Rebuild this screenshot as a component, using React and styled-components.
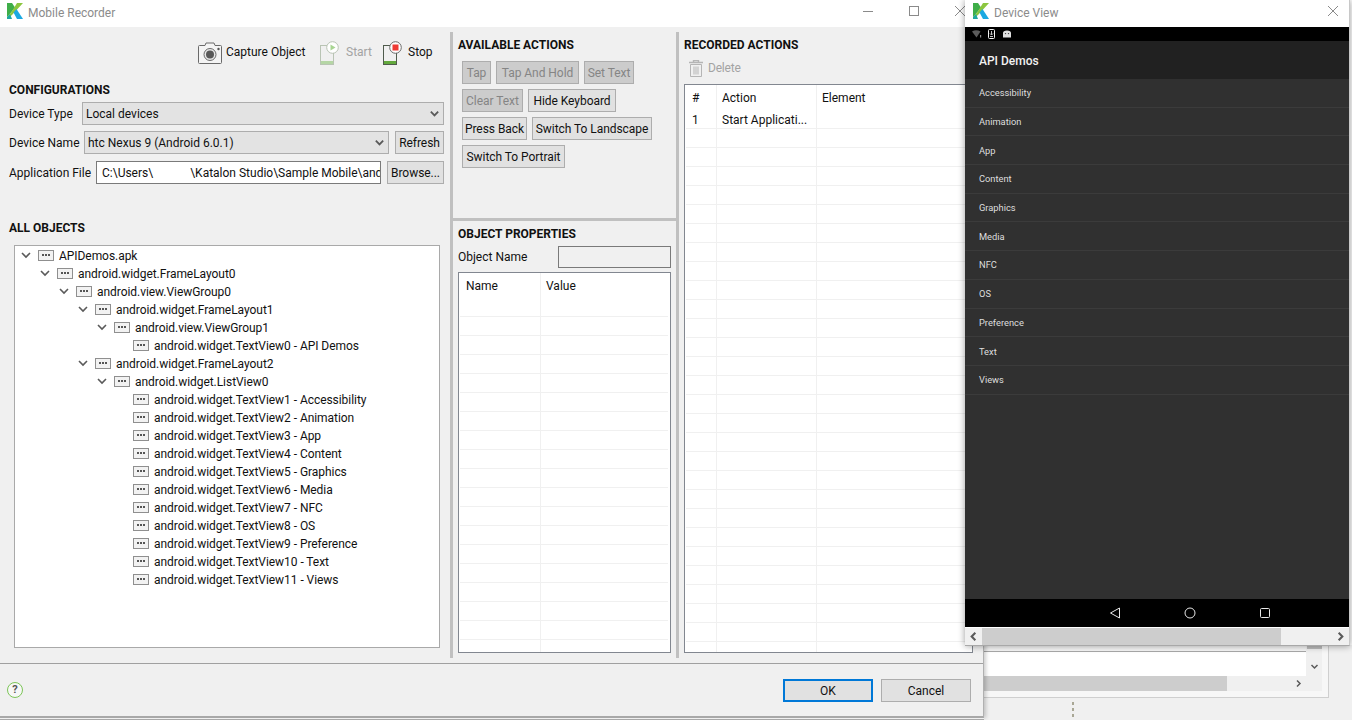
import React from 'react';
import styled, { createGlobalStyle } from 'styled-components';

const treeItems = [
  { level: 0, label: 'APIDemos.apk', open: true },
  { level: 1, label: 'android.widget.FrameLayout0', open: true },
  { level: 2, label: 'android.view.ViewGroup0', open: true },
  { level: 3, label: 'android.widget.FrameLayout1', open: true },
  { level: 4, label: 'android.view.ViewGroup1', open: true },
  { level: 5, label: 'android.widget.TextView0 - API Demos' },
  { level: 3, label: 'android.widget.FrameLayout2', open: true },
  { level: 4, label: 'android.widget.ListView0', open: true },
  { level: 5, label: 'android.widget.TextView1 - Accessibility' },
  { level: 5, label: 'android.widget.TextView2 - Animation' },
  { level: 5, label: 'android.widget.TextView3 - App' },
  { level: 5, label: 'android.widget.TextView4 - Content' },
  { level: 5, label: 'android.widget.TextView5 - Graphics' },
  { level: 5, label: 'android.widget.TextView6 - Media' },
  { level: 5, label: 'android.widget.TextView7 - NFC' },
  { level: 5, label: 'android.widget.TextView8 - OS' },
  { level: 5, label: 'android.widget.TextView9 - Preference' },
  { level: 5, label: 'android.widget.TextView10 - Text' },
  { level: 5, label: 'android.widget.TextView11 - Views' },
];

const actionRows = [
  [
    { label: 'Tap', w: 29, off: true },
    { label: 'Tap And Hold', w: 83, off: true },
    { label: 'Set Text', w: 50, off: true },
  ],
  [
    { label: 'Clear Text', w: 61, off: true },
    { label: 'Hide Keyboard', w: 88 },
  ],
  [
    { label: 'Press Back', w: 65 },
    { label: 'Switch To Landscape', w: 120 },
  ],
  [{ label: 'Switch To Portrait', w: 103 }],
];

const demoItems = ['Accessibility', 'Animation', 'App', 'Content', 'Graphics', 'Media', 'NFC', 'OS', 'Preference', 'Text', 'Views'];

const Logo = () => (
  <LogoSvg viewBox="0 0 16 16">
    <polygon points="0,0 5,0 8,4.5 4.5,9 0,14" fill="#3fae49" />
    <polygon points="10,0 16,0 5,12 0,16 0,14 4.5,9" fill="#8cc63f" />
    <polygon points="6.5,9.5 9.5,6 16,16 10,16" fill="#1ba9e1" />
    <polygon points="0,14 3,11 5,16 0,16" fill="#1fa8a0" />
  </LogoSvg>
);

const Chevron = ({ dir = 'down', size = 9, color = '#5a5a5a', width = 1.5 }) => {
  const points = {
    down: '1.5,3 4.5,6 7.5,3',
    left: '6,1.5 3,4.5 6,7.5',
    right: '3,1.5 6,4.5 3,7.5',
  };
  return (
    <svg width={size} height={size} viewBox="0 0 9 9">
      <polyline points={points[dir]} fill="none" stroke={color} strokeWidth={width} />
    </svg>
  );
};

const CloseIcon = () => (
  <svg width="10" height="10" viewBox="0 0 10 10">
    <path d="M0 0L10 10M10 0L0 10" stroke="#8a8a8a" strokeWidth="1" />
  </svg>
);

const CameraIcon = () => (
  <svg width="24" height="22" viewBox="0 0 24 22">
    <path d="M7 3.5L8 1H16L17 3.5H22.5Q23.5 3.5 23.5 4.5V20.5Q23.5 21.5 22.5 21.5H1.5Q.5 21.5 .5 20.5V4.5Q.5 3.5 1.5 3.5Z" fill="#f4f4f4" stroke="#6a6a6a" />
    <circle cx="12" cy="12.5" r="6" fill="#e8e8e8" stroke="#6a6a6a" />
    <circle cx="12" cy="12.5" r="4" fill="#585858" />
    <circle cx="20.5" cy="7" r="1.2" fill="#555" />
  </svg>
);

const PhoneIcon = ({ stroke, bar, badge, children }) => (
  <svg width="19" height="24" viewBox="0 0 19 24">
    <rect x="0.5" y="4.5" width="13" height="19" fill="none" stroke={stroke} />
    <rect x="1" y="20" width="12" height="3" fill={bar} />
    <circle cx="12.5" cy="6.5" r="5.8" fill="#fff" stroke={badge} />
    {children}
  </svg>
);

const TrashIcon = () => (
  <svg width="14" height="17" viewBox="0 0 14 17">
    <path d="M0 2.5H14M4.5 2.5V.5H9.5V2.5" stroke="#b5b5b5" strokeWidth="1.4" fill="none" />
    <path d="M1.5 4.5H12.5V16.5H1.5ZM5 6.5V14.5M7 6.5V14.5M9 6.5V14.5" stroke="#b5b5b5" fill="none" />
  </svg>
);

const NodeIcon = () => (
  <NodeBox>
    <span />
    <span />
    <span />
  </NodeBox>
);

const TableGrid = ({ cols, heads, rows, count }) => (
  <GridTable>
    <GridHead $cols={cols}>
      {heads.map((h) => (
        <HeadCell key={h}>{h}</HeadCell>
      ))}
    </GridHead>
    {Array.from({ length: count }).map((_, i) => (
      <GridRow key={i} $cols={cols}>
        {heads.map((h, j) => (
          <BodyCell key={h}>{rows[i] ? rows[i][j] : ''}</BodyCell>
        ))}
      </GridRow>
    ))}
  </GridTable>
);

const App = () => {
  return (
    <Desktop>
      <GlobalStyle />

      <BackTop />
      <BackWindow>
        <BackContent>
          <BackWhite />
          <BackVBar>
            <BackThumbTop />
            <Chevron dir="down" />
          </BackVBar>
        </BackContent>
        <BackHBar>
          <BackHThumb />
          <Chevron dir="right" />
        </BackHBar>
      </BackWindow>
      <GripDots>
        <i />
        <i />
        <i />
      </GripDots>

      <MainWindow>
        <TitleBar>
          <Logo />
          <TitleText>Mobile Recorder</TitleText>
          <WinControls>
            <WinButton>
              <svg width="10" height="10" viewBox="0 0 10 10">
                <path d="M0 5.5H10" stroke="#8a8a8a" />
              </svg>
            </WinButton>
            <WinButton>
              <svg width="10" height="10" viewBox="0 0 10 10">
                <rect x=".5" y=".5" width="9" height="9" fill="none" stroke="#8a8a8a" />
              </svg>
            </WinButton>
            <WinButton>
              <CloseIcon />
            </WinButton>
          </WinControls>
        </TitleBar>

        <Body>
          <LeftPane>
            <Toolbar>
              <ToolItem $gap={4}>
                <CameraIcon />
                <ToolLabel $w={80}>Capture Object</ToolLabel>
              </ToolItem>
              <ToolItem $gap={7} $off>
                <PhoneIcon stroke="#b9c4b4" bar="#b5d6a5" badge="#b9c4b4">
                  <polygon points="10.5,3.5 15.5,6.5 10.5,9.5" fill="#a8d592" />
                </PhoneIcon>
                <ToolLabel $w={23}>Start</ToolLabel>
              </ToolItem>
              <ToolItem $gap={6}>
                <PhoneIcon stroke="#4f5b4c" bar="#62a83c" badge="#6b6b6b">
                  <rect x="9.5" y="3.5" width="6" height="6" fill="#ee3a34" />
                </PhoneIcon>
                <ToolLabel $w={24}>Stop</ToolLabel>
              </ToolItem>
            </Toolbar>

            <SectionTitle $top={17}>CONFIGURATIONS</SectionTitle>
            <FormRow $top={4}>
              <FieldLabel $width={73}>Device Type</FieldLabel>
              <SelectBox>
                <span>Local devices</span>
                <Chevron dir="down" size={11} />
              </SelectBox>
            </FormRow>
            <FormRow $top={6}>
              <FieldLabel $width={75}>Device Name</FieldLabel>
              <SelectBox>
                <span>htc Nexus 9 (Android 6.0.1)</span>
                <Chevron dir="down" size={11} />
              </SelectBox>
              <FlatButton $w={49}>Refresh</FlatButton>
            </FormRow>
            <FormRow $top={7}>
              <FieldLabel $width={87}>Application File</FieldLabel>
              <PathInput>
                C:\Users\<Redacted />\Katalon Studio\Sample Mobile\andr
              </PathInput>
              <FlatButton $w={57}>Browse...</FlatButton>
            </FormRow>

            <SectionTitle $top={36}>ALL OBJECTS</SectionTitle>
            <TreeBox>
              {treeItems.map((item) => (
                <TreeRow key={item.label} $level={item.level}>
                  <TreeToggle>{item.open && <Chevron dir="down" size={12} width={1.2} />}</TreeToggle>
                  <NodeIcon />
                  <TreeLabel>{item.label}</TreeLabel>
                </TreeRow>
              ))}
            </TreeBox>
          </LeftPane>

          <VSash />

          <MiddlePane>
            <ActionsPane>
              <PaneTitle>AVAILABLE ACTIONS</PaneTitle>
              <ActionList>
                {actionRows.map((row, i) => (
                  <ActionRow key={i}>
                    {row.map((a) => (
                      <FlatButton key={a.label} $w={a.w} $off={a.off}>
                        {a.label}
                      </FlatButton>
                    ))}
                  </ActionRow>
                ))}
              </ActionList>
            </ActionsPane>
            <HSash />
            <PropsPane>
              <PaneTitle>OBJECT PROPERTIES</PaneTitle>
              <NameRow>
                <span>Object Name</span>
                <NameInput />
              </NameRow>
              <TableGrid cols="80px 1fr" heads={['Name', 'Value']} rows={[]} count={20} />
            </PropsPane>
          </MiddlePane>

          <VSash />

          <RightPane>
            <PaneTitle>RECORDED ACTIONS</PaneTitle>
            <DeleteRow>
              <TrashIcon />
              <DeleteText>Delete</DeleteText>
            </DeleteRow>
            <TableGrid
              cols="30px 100px 1fr"
              heads={['#', 'Action', 'Element']}
              rows={[['1', 'Start Applicati...', '']]}
              count={30}
            />
          </RightPane>
        </Body>

        <Footer>
          <HelpIcon>?</HelpIcon>
          <DialogButtons>
            <DialogButton $primary>OK</DialogButton>
            <DialogButton>Cancel</DialogButton>
          </DialogButtons>
        </Footer>
      </MainWindow>

      <DeviceWindow>
        <DeviceTitle>
          <Logo />
          <TitleText>Device View</TitleText>
          <DeviceClose>
            <CloseIcon />
          </DeviceClose>
        </DeviceTitle>
        <StatusBar>
          <svg width="10" height="8" viewBox="0 0 10 8">
            <path d="M0 1.5Q4 -1 8.5 1.5L4.5 7.5Z" fill="#5c5c5c" />
            <rect x="8" y="5" width="1.2" height="2.5" fill="#8a8a8a" />
          </svg>
          <svg width="7" height="10" viewBox="0 0 7 10">
            <rect x=".5" y=".5" width="6" height="9" rx="1" fill="none" stroke="#f2f2f2" />
            <path d="M3.5 2V5.5M2 4.5L3.5 6L5 4.5M2 7.5H5" stroke="#f2f2f2" strokeWidth=".8" fill="none" />
          </svg>
          <svg width="10" height="8" viewBox="-2 0 10 8">
            <path d="M0 3Q0 .5 4 .5Q8 .5 8 3V7.5H0Z" fill="#e0e0e0" />
            <circle cx="2.5" cy="3.6" r=".7" fill="#333" />
            <circle cx="5.5" cy="3.6" r=".7" fill="#333" />
          </svg>
        </StatusBar>
        <AppBar>API Demos</AppBar>
        <DemoList>
          {demoItems.map((d) => (
            <DemoItem key={d}>{d}</DemoItem>
          ))}
        </DemoList>
        <NavBar>
          <svg width="12" height="12" viewBox="0 0 12 12">
            <path d="M10.5 1V11L1.5 6Z" fill="none" stroke="#e8e8e8" />
          </svg>
          <svg width="12" height="12" viewBox="0 0 12 12">
            <circle cx="6" cy="6" r="5" fill="none" stroke="#e8e8e8" />
          </svg>
          <svg width="12" height="12" viewBox="0 0 12 12">
            <rect x="1.5" y="1.5" width="9" height="9" rx="1" fill="none" stroke="#e8e8e8" />
          </svg>
        </NavBar>
        <DeviceScroll>
          <ScrollEnd>
            <Chevron dir="left" size={11} width={1.7} />
          </ScrollEnd>
          <DeviceThumb />
          <ScrollEnd>
            <Chevron dir="right" size={11} width={1.7} />
          </ScrollEnd>
        </DeviceScroll>
      </DeviceWindow>
    </Desktop>
  );
};

const GlobalStyle = createGlobalStyle`
  html, body {
    margin: 0;
    height: 100%;
    overflow: hidden;
    background: #f0f0f0;
  }
  * {
    box-sizing: border-box;
  }
`;

const Desktop = styled.div`
  position: relative;
  width: 1352px;
  height: 720px;
  overflow: hidden;
  background: #f0f0f0;
  font-family: "Roboto", "Liberation Sans", sans-serif;
  font-size: 12px;
  color: #111;
`;

const LogoSvg = styled.svg`
  width: 16px;
  height: 16px;
  flex: none;
`;

const BackTop = styled.div`
  position: absolute;
  left: 900px;
  top: 0;
  width: 452px;
  height: 645px;
  background: #fff;
`;

const BackWindow = styled.div`
  position: absolute;
  left: 900px;
  top: 645px;
  width: 429px;
  height: 53px;
  padding: 6px 6px 6px 0;
  background: #f7f7f7;
  border-right: 1px solid #cfcfcf;
  border-bottom: 1px solid #cfcfcf;
  display: flex;
  flex-direction: column;
`;

const BackContent = styled.div`
  flex: 1;
  display: flex;
  margin-top: -6px;
`;

const BackWhite = styled.div`
  flex: 1;
  margin-top: 6px;
  background: #fff;
  border-top: 1px solid #a8a8a8;
`;

const BackVBar = styled.div`
  width: 16px;
  background: #f0f0f0;
  display: flex;
  flex-direction: column;
  align-items: center;
  gap: 13px;
`;

const BackThumbTop = styled.div`
  width: 15px;
  height: 4px;
  background: #bdbdbd;
`;

const BackHBar = styled.div`
  height: 15px;
  background: #f0f0f0;
  display: flex;
  align-items: center;
`;

const BackHThumb = styled.div`
  width: 327px;
  height: 15px;
  background: #cdcdcd;
  margin-right: 67px;
`;

const GripDots = styled.div`
  position: absolute;
  left: 1072px;
  top: 702px;
  display: flex;
  flex-direction: column;
  gap: 3px;
  i {
    width: 2px;
    height: 3px;
    background: #a9a795;
  }
`;

const MainWindow = styled.div`
  position: absolute;
  left: 0;
  top: 0;
  width: 984px;
  height: 718px;
  display: flex;
  flex-direction: column;
  background: #f0f0f0;
  border-right: 1px solid #b0b0b0;
  border-bottom: 2px solid #a8a8a8;
  box-shadow: 0 1px 0 #f0f0f0, 0 2px 0 #a8a8a8, 2px 0 4px rgba(0, 0, 0, 0.2);
`;

const TitleBar = styled.div`
  height: 27px;
  flex: none;
  display: flex;
  align-items: center;
  padding: 0 0 5px 7px;
  background: #fff;
`;

const TitleText = styled.span`
  margin: 4px 0 0 5px;
  color: #8b8b8b;
  font-size: 12px;
`;

const WinControls = styled.div`
  margin-left: auto;
  display: flex;
  align-self: stretch;
`;

const WinButton = styled.div`
  width: 46px;
  display: flex;
  align-items: center;
  justify-content: center;
`;

const Body = styled.div`
  flex: 1;
  min-height: 0;
  display: flex;
  padding: 5px 0 5px;
`;

const LeftPane = styled.div`
  width: 450px;
  flex: none;
  display: flex;
  flex-direction: column;
  margin-top: -5px;
`;

const Toolbar = styled.div`
  height: 24px;
  margin-top: 14px;
  padding-right: 18px;
  display: flex;
  justify-content: flex-end;
  gap: 14px;
`;

const ToolItem = styled.div`
  display: flex;
  align-items: center;
  gap: ${(p) => p.$gap}px;
  color: ${(p) => (p.$off ? '#a3a3a3' : '#111')};
`;

const ToolLabel = styled.span`
  width: ${(p) => p.$w}px;
  margin-bottom: 2px;
  white-space: nowrap;
`;

const SectionTitle = styled.div`
  height: 16px;
  line-height: 16px;
  margin: ${(p) => p.$top}px 0 0 9px;
  font-weight: 700;
`;

const FormRow = styled.div`
  height: 23px;
  margin-top: ${(p) => p.$top}px;
  padding: 0 6px 0 9px;
  display: flex;
  align-items: stretch;
  gap: 6px;
`;

const FieldLabel = styled.span`
  width: ${(p) => p.$width}px;
  margin-right: -6px;
  flex: none;
  line-height: 25px;
`;

const SelectBox = styled.div`
  flex: 1;
  min-width: 0;
  display: flex;
  align-items: center;
  justify-content: space-between;
  padding: 0 3px 0 3px;
  background: #e3e3e3;
  border: 1px solid #adadad;
  span {
    padding-top: 1px;
  }
`;

const FlatButton = styled.div`
  width: ${(p) => p.$w}px;
  flex: none;
  height: 23px;
  padding-top: 1px;
  display: flex;
  align-items: center;
  justify-content: center;
  white-space: nowrap;
  letter-spacing: -0.05px;
  background: ${(p) => (p.$off ? '#cccccc' : '#e1e1e1')};
  color: ${(p) => (p.$off ? '#858585' : '#111')};
  border: 1px solid #adadad;
`;

const PathInput = styled.div`
  width: 285px;
  flex: none;
  padding: 0 5px;
  line-height: 23px;
  overflow: hidden;
  white-space: nowrap;
  background: #fff;
  border: 1px solid #7a7a7a;
`;

const Redacted = styled.span`
  display: inline-block;
  width: 37px;
`;

const TreeBox = styled.div`
  height: 403px;
  margin: 9px 10px 0 14px;
  background: #fff;
  border: 1px solid #a9a9a9;
  overflow: hidden;
`;

const TreeRow = styled.div`
  height: 18px;
  display: flex;
  align-items: center;
  padding-left: ${(p) => (p.$level === 5 ? 100 : 5 + p.$level * 19)}px;
`;

const TreeToggle = styled.span`
  width: 12px;
  height: 12px;
  flex: none;
  display: flex;
`;

const NodeBox = styled.span`
  width: 16px;
  height: 11px;
  margin-left: 6px;
  flex: none;
  display: flex;
  align-items: center;
  justify-content: center;
  gap: 1px;
  background: #f2f2f2;
  border: 1px solid #8f8f8f;
  span {
    width: 2px;
    height: 2px;
    background: #555;
  }
`;

const TreeLabel = styled.span`
  margin-left: 5px;
  padding-top: 2px;
  white-space: nowrap;
  letter-spacing: -0.05px;
`;

const VSash = styled.div`
  width: 3px;
  flex: none;
  background: #c0c0c0;
`;

const MiddlePane = styled.div`
  width: 223px;
  flex: none;
  display: flex;
  flex-direction: column;
`;

const ActionsPane = styled.div`
  height: 186px;
  flex: none;
  padding: 5px 5px 0;
`;

const PaneTitle = styled.div`
  height: 16px;
  line-height: 16px;
  font-weight: 700;
  white-space: nowrap;
`;

const ActionList = styled.div`
  margin: 8px 0 0 4px;
  display: flex;
  flex-direction: column;
  gap: 5px;
`;

const ActionRow = styled.div`
  display: flex;
  gap: 5px;
`;

const HSash = styled.div`
  height: 3px;
  flex: none;
  background: #c0c0c0;
`;

const PropsPane = styled.div`
  flex: 1;
  min-height: 0;
  padding: 5px 5px 5px;
  display: flex;
  flex-direction: column;
`;

const NameRow = styled.div`
  height: 22px;
  margin: 4px 0 4px;
  display: flex;
  align-items: center;
  justify-content: space-between;
`;

const NameInput = styled.div`
  width: 113px;
  height: 22px;
  background: #f0f0f0;
  border: 1px solid #7a7a7a;
`;

const GridTable = styled.div`
  flex: 1;
  min-height: 0;
  padding: 0 2px 3px 1px;
  background: #fff;
  border: 1px solid #828790;
  overflow: hidden;
  position: relative;
`;

const GridHead = styled.div`
  height: 25px;
  display: grid;
  grid-template-columns: ${(p) => p.$cols};
`;

const GridRow = styled.div`
  height: 19px;
  display: grid;
  grid-template-columns: ${(p) => p.$cols};
  border-bottom: 1px solid #f0f0f0;
`;

const HeadCell = styled.div`
  padding-left: 5px;
  line-height: 27px;
  border-left: 1px solid #f0f0f0;
  &:first-child {
    border-left: 0;
    padding-left: 6px;
  }
`;

const BodyCell = styled.div`
  padding-left: 5px;
  line-height: 20px;
  white-space: nowrap;
  overflow: hidden;
  border-left: 1px solid #f0f0f0;
  &:first-child {
    border-left: 0;
    padding-left: 6px;
  }
`;

const RightPane = styled.div`
  flex: 1;
  min-width: 0;
  padding: 5px 10px 5px 5px;
  display: flex;
  flex-direction: column;
`;

const DeleteRow = styled.div`
  height: 17px;
  margin: 7px 0 7px 5px;
  display: flex;
  align-items: center;
  gap: 5px;
  color: #a3a3a3;
`;

const DeleteText = styled.span`
  margin-bottom: 1px;
  letter-spacing: -0.2px;
`;

const Footer = styled.div`
  height: 53px;
  flex: none;
  display: flex;
  align-items: center;
  justify-content: space-between;
  padding: 0 12px 0 7px;
  border-top: 1px solid #a0a0a0;
`;

const HelpIcon = styled.span`
  width: 16px;
  height: 16px;
  border-radius: 50%;
  border: 1px solid #7cc557;
  background: #f7f7f7;
  color: #555;
  font-weight: 700;
  font-size: 11px;
  line-height: 14px;
  text-align: center;
`;

const DialogButtons = styled.div`
  display: flex;
  gap: 8px;
`;

const DialogButton = styled.div`
  width: 90px;
  height: 23px;
  padding-top: 1px;
  display: flex;
  align-items: center;
  justify-content: center;
  background: #e1e1e1;
  border: ${(p) => (p.$primary ? '2px solid #0078d7' : '1px solid #adadad')};
`;

const DeviceWindow = styled.div`
  position: absolute;
  left: 965px;
  top: 0;
  width: 385px;
  height: 646px;
  display: flex;
  flex-direction: column;
  background: #fff;
  border-bottom: 1px solid #a8a8a8;
  border-right: 1px solid #c8c8c8;
  box-shadow: 0 0 7px rgba(0, 0, 0, 0.4);
`;

const DeviceTitle = styled.div`
  height: 27px;
  flex: none;
  display: flex;
  align-items: center;
  padding: 0 11px 5px 8px;
`;

const DeviceClose = styled.div`
  margin-left: auto;
  display: flex;
`;

const StatusBar = styled.div`
  height: 14px;
  flex: none;
  background: #000;
  display: flex;
  align-items: center;
  gap: 6px;
  padding-left: 7px;
`;

const AppBar = styled.div`
  height: 38px;
  flex: none;
  display: flex;
  align-items: center;
  padding: 2px 0 0 14px;
  background: #212121;
  color: #f2f2f2;
  font-weight: 500;
  font-size: 12px;
`;

const DemoList = styled.div`
  flex: 1;
  min-height: 0;
  background: #303030;
  display: grid;
  grid-auto-rows: 28.7px;
`;

const DemoItem = styled.div`
  display: flex;
  align-items: center;
  padding-left: 14px;
  font-size: 9.3px;
  color: #dedede;
  border-bottom: 1px solid #3b3b3b;
`;

const NavBar = styled.div`
  height: 28px;
  flex: none;
  padding-left: 66px;
  background: #000;
  display: flex;
  align-items: center;
  justify-content: center;
  gap: 63px;
`;

const DeviceScroll = styled.div`
  height: 18px;
  flex: none;
  display: flex;
  align-items: stretch;
  background: #f0f0f0;
  border-top: 1px solid #fff;
`;

const ScrollEnd = styled.div`
  width: 17px;
  display: flex;
  align-items: center;
  justify-content: center;
  &:last-child {
    margin-left: auto;
  }
`;

const DeviceThumb = styled.div`
  width: 299px;
  background: #cdcdcd;
`;

export default App;
